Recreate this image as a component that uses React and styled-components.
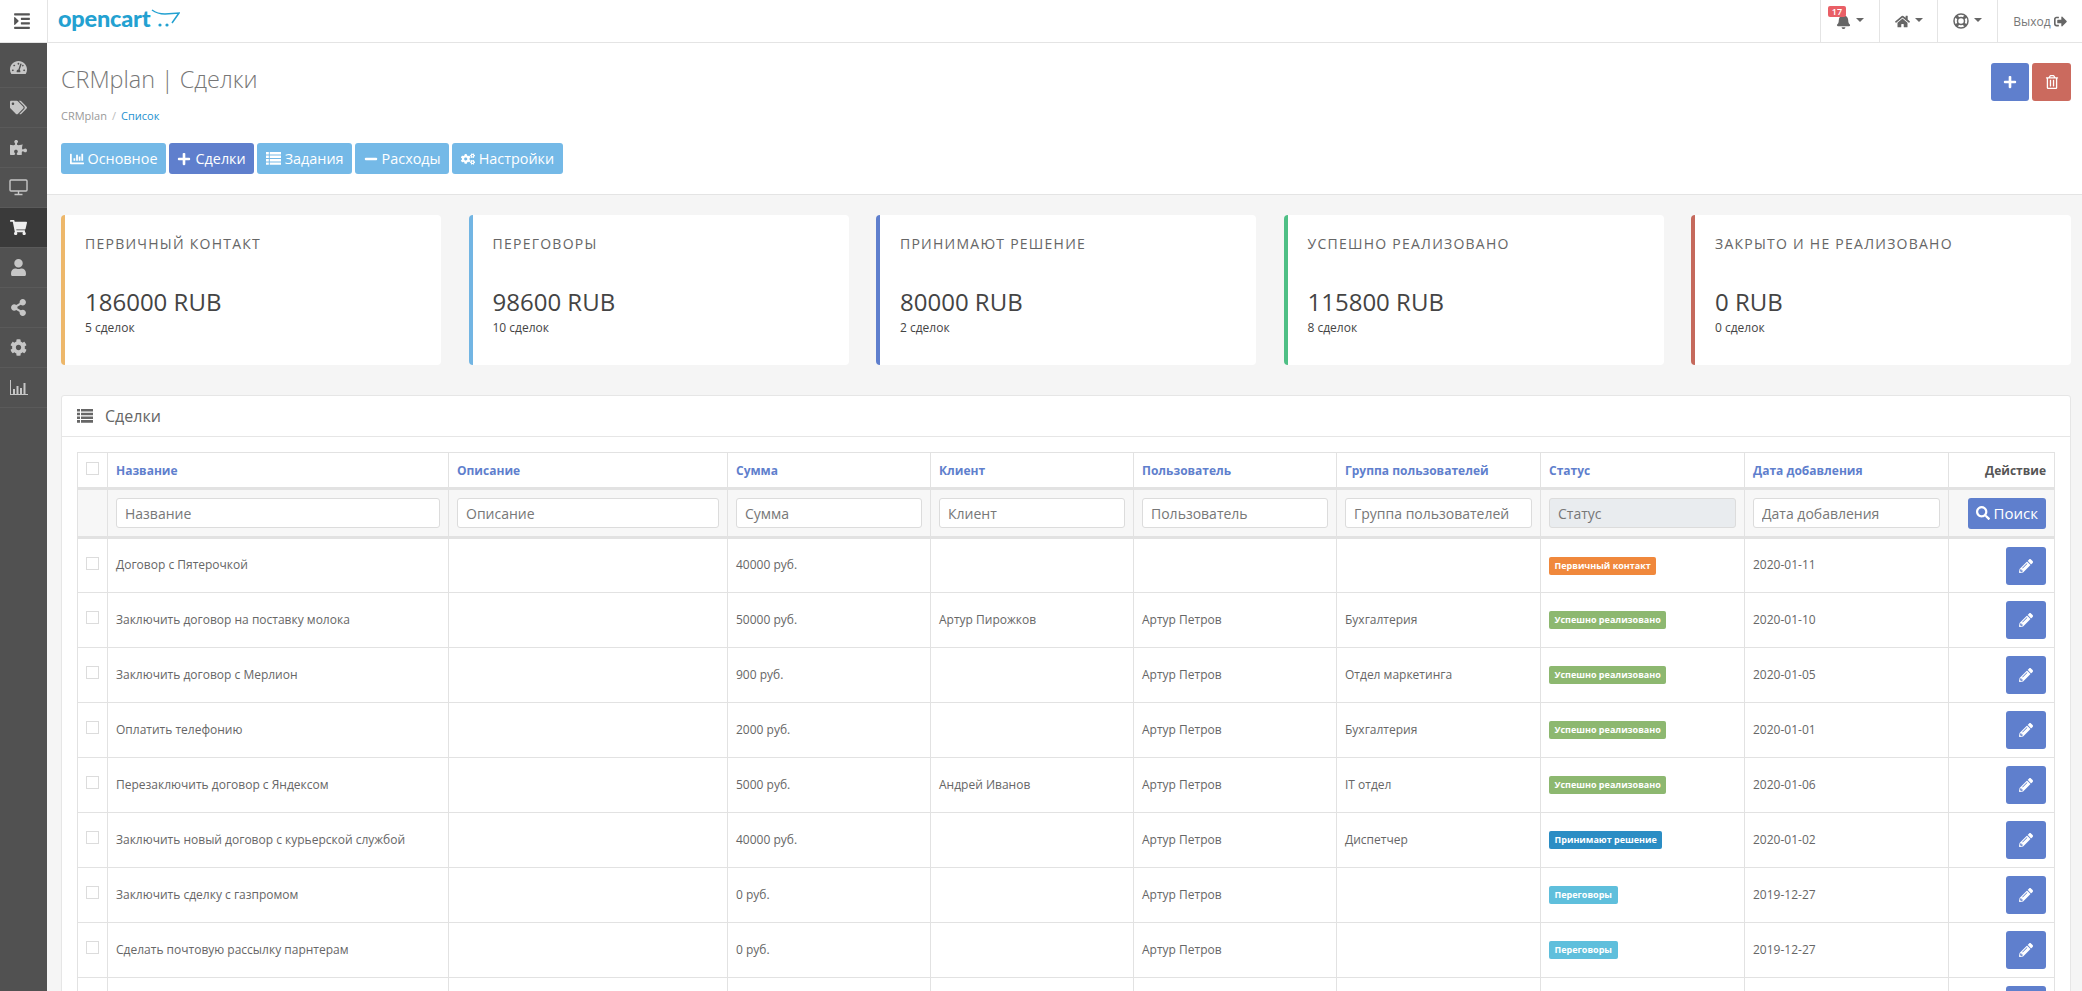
import styled, { createGlobalStyle } from 'styled-components'
import {
  FaBell, FaChartBar, FaCog, FaCogs, FaHome, FaIndent, FaMinus, FaPencilAlt, FaPlus,
  FaPuzzlePiece, FaRegTrashAlt, FaSearch, FaShareAlt, FaShoppingCart,
  FaSignOutAlt, FaTachometerAlt, FaTags, FaUser,
} from 'react-icons/fa'

const GlobalStyle = createGlobalStyle`
  html, body { margin: 0; padding: 0; height: 991px; overflow: hidden; }
  body {
    font-family: "Open Sans", "Liberation Sans", sans-serif;
    font-size: 13px;
    color: #666;
    background: #f5f5f5;
  }
  * { box-sizing: border-box; }
`

const Header = styled.header`
  display: flex;
  height: 43px;
  background: #fff;
  border-bottom: 1px solid #e4e4e4;
`

const MenuToggle = styled.div`
  width: 48px;
  display: flex;
  align-items: center;
  justify-content: center;
  padding-right: 3px;
  font-size: 18px;
  color: #555;
  border-right: 1px solid #e4e4e4;
`

const Logo = styled.div`
  display: flex;
  align-items: flex-start;
  margin-left: 10px;
  padding-top: 4px;
  font-family: "Lato", sans-serif;
  font-weight: 900;
  font-size: 23.5px;
  letter-spacing: -0.2px;
  color: #23a1d1;
`

const TopNav = styled.nav`
  display: flex;
  margin-left: auto;
`

const TopItem = styled.div`
  position: relative;
  display: flex;
  align-items: center;
  justify-content: center;
  gap: 3px;
  width: ${p => p.$w}px;
  font-size: 15px;
  color: #666;
  border-left: 1px solid #e4e4e4;
`

const Caret = styled.span`
  width: 0;
  height: 0;
  margin-left: 2px;
  margin-bottom: 2px;
  border-left: 4px solid transparent;
  border-right: 4px solid transparent;
  border-top: 4px solid #666;
`

const Badge = styled.span`
  position: absolute;
  left: 7px;
  top: 6px;
  width: 18px;
  height: 11px;
  border-radius: 2px;
  background: #e95f66;
  color: #fff;
  font-size: 9px;
  font-weight: 600;
  line-height: 11px;
  text-align: center;
`

const ExitText = styled.span`
  font-size: 12px;
  color: #777;
`

const Body = styled.div`
  display: flex;
`

const Sidebar = styled.aside`
  flex: 0 0 47px;
  height: 948px;
  padding-top: 5px;
  background: #515151;
`

const SideItem = styled.div`
  display: flex;
  align-items: center;
  justify-content: center;
  height: 40px;
  padding-right: 11px;
  font-size: 17px;
  color: ${p => (p.$active ? '#eee' : '#c6c6c6')};
  background: ${p => (p.$active ? '#3a3a3a' : 'transparent')};
  border-bottom: 1px solid #5a5a5a;
`

const Main = styled.main`
  flex: 1;
  min-width: 0;
`

const PageHeader = styled.div`
  display: flex;
  justify-content: space-between;
  height: 152px;
  padding: 20px 11px 0 14px;
  background: #fff;
  border-bottom: 1px solid #e4e4e4;
`

const Title = styled.h1`
  margin: 0;
  font-size: 23.4px;
  font-weight: 300;
  line-height: 32px;
  color: #777;
`

const Crumbs = styled.div`
  margin-top: 13px;
  font-size: 11px;
  line-height: 16px;
  color: #999;
  a { color: #1e91cf; text-decoration: none; }
  i { margin: 0 5px; font-style: normal; color: #bbb; }
`

const Tabs = styled.div`
  display: flex;
  gap: 3px;
  margin-top: 19px;
`

const Tab = styled.div`
  display: flex;
  align-items: center;
  gap: 4px;
  height: 31px;
  padding: 0 8.5px;
  border-radius: 3px;
  background: ${p => (p.$active ? '#5f7fcd' : '#74b9e7')};
  color: #fff;
  font-size: 14.4px;
  font-weight: 400;
  svg { font-size: 14px; }
`

const Actions = styled.div`
  display: flex;
  gap: 3px;
`

const SquareButton = styled.div`
  display: flex;
  align-items: center;
  justify-content: center;
  width: ${p => p.$w || 38}px;
  height: 38px;
  border-radius: 3px;
  background: ${p => p.$bg};
  color: #fff;
  font-size: 14px;
`

const Content = styled.div`
  padding: 20px 11px 0 14px;
`

const Cards = styled.div`
  display: grid;
  grid-template-columns: repeat(5, 1fr);
  gap: 27.5px;
`

const Card = styled.div`
  height: 150px;
  padding: 19px 20px 0 20px;
  background: #fff;
  border-left: 4px solid ${p => p.$color};
  border-radius: 4px;
`

const CardTitle = styled.div`
  font-size: 14px;
  line-height: 20px;
  font-weight: 500;
  letter-spacing: 1.25px;
  text-transform: uppercase;
  color: #666;
`

const CardValue = styled.div`
  margin-top: 31px;
  font-size: 24px;
  line-height: 34px;
  color: #444;
`

const CardSub = styled.div`
  margin-top: 1px;
  font-size: 12px;
  line-height: 16px;
  color: #444;
`

const Panel = styled.section`
  margin-top: 30px;
  height: 700px;
  background: #fff;
  border: 1px solid #e6e6e6;
  border-radius: 3px;
`

const PanelHead = styled.div`
  display: flex;
  align-items: center;
  gap: 12px;
  height: 41px;
  padding-left: 15px;
  border-bottom: 1px solid #e6e6e6;
  font-size: 16px;
  color: #666;
`

const PanelBody = styled.div`
  padding: 15px 15px 0 15px;
`

const Table = styled.table`
  width: 1977px;
  table-layout: fixed;
  border-collapse: collapse;
  font-size: 12px;
`

const HeadCell = styled.th`
  height: 36px;
  padding: 0 8px;
  text-align: ${p => (p.$right ? 'right' : 'left')};
  font-size: 12px;
  font-weight: 700;
  color: ${p => (p.$right ? '#555' : '#5f7fcd')};
  border: 1px solid #e2e2e2;
  border-bottom: 3px solid #e2e2e2;
`

const FilterCell = styled.td`
  height: 49px;
  padding: 0 8px;
  background: #f7f7f7;
  text-align: ${p => (p.$right ? 'right' : 'left')};
  border: 1px solid #e2e2e2;
  border-bottom: 3px solid #e2e2e2;
`

const FilterInput = styled.input`
  display: block;
  width: 100%;
  height: 30px;
  padding: 0 8px;
  font-family: inherit;
  font-size: 14px;
  color: #666;
  background: ${p => (p.disabled ? '#e9ecef' : '#fff')};
  border: 1px solid #dcdcdc;
  border-radius: 3px;
  &::placeholder { color: #777; opacity: 1; }
`

const SearchButton = styled.div`
  display: inline-flex;
  align-items: center;
  gap: 4px;
  height: 31px;
  padding: 0 8px;
  border-radius: 3px;
  background: #5f7fcd;
  color: #fff;
  font-size: 15px;
  svg { font-size: 14px; }
`

const Cell = styled.td`
  height: 55px;
  padding: 0 8px 2px;
  border: 1px solid #e2e2e2;
  color: #666;
  text-align: ${p => (p.$right ? 'right' : 'left')};
`

const Check = styled.span`
  display: block;
  width: 13px;
  height: 13px;
  margin: ${p => (p.$head ? '-4px' : '-3px')} 0 0 0;
  background: #fff;
  border: 1px solid #dcdcdc;
`

const Label = styled.span`
  display: inline-block;
  margin-top: 2px;
  padding: 0 5.5px;
  height: 18px;
  border-radius: 2px;
  background: ${p => p.$bg};
  color: #fff;
  font-size: 9px;
  font-weight: 700;
  line-height: 18px;
`

const EditButton = styled.div`
  display: inline-flex;
  align-items: center;
  justify-content: center;
  margin-top: 2px;
  vertical-align: middle;
  width: 40px;
  height: 38px;
  border-radius: 3px;
  background: #5f7fcd;
  color: #fff;
  font-size: 14px;
`

const DesktopIcon = () => (
  <svg width="19" height="17" viewBox="0 0 19 17" fill="none" stroke="currentColor">
    <rect x="1" y="1" width="17" height="11" rx="1" strokeWidth="1.4" />
    <path d="M9.5 12v3M5.5 15.5h8" strokeWidth="1.4" />
  </svg>
)

const BarsIcon = () => (
  <svg width="19" height="17" viewBox="0 0 19 17" fill="currentColor">
    <path d="M1 1h1v14h17v1H1z" />
    <path d="M4 10h2v5H4zM7.5 7h2v8h-2zM11 9h2v6h-2zM14.5 4h2v11h-2z" />
  </svg>
)

const ListIcon = ({ size = 16 }) => (
  <svg width={size} height={size * 0.875} viewBox="0 0 16 14" fill="currentColor">
    <path d="M0 0h3v2.600H0zM4 0h12v2.600H4zM0 3.700h3v2.600H0zM4 3.700h12v2.600H4zM0 7.400h3V10H0zM4 7.400h12V10H4zM0 11.100h3v2.600H0zM4 11.100h12v2.600H4z" />
  </svg>
)

const RingIcon = () => (
  <svg width="16" height="16" viewBox="0 0 16 16" fill="none" stroke="currentColor">
    <circle cx="8" cy="8" r="7" strokeWidth="1.500" />
    <circle cx="8" cy="8" r="3.500" strokeWidth="1.500" />
    <path d="M3 3l2.500 2.500M13 3l-2.500 2.500M3 13l2.500-2.500M13 13l-2.500-2.500" strokeWidth="3" />
  </svg>
)

const CartLogo = () => (
  <svg width="29" height="19" viewBox="0 0 29 19" style={{ marginLeft: 1, marginTop: 5 }}>
    <path d="M1 1c4 3 9 4 13 4l14-1-7 10" fill="none" stroke="#23a1d1" strokeWidth="1.500" />
    <circle cx="9" cy="16" r="1.600" fill="#23a1d1" />
    <circle cx="16" cy="16" r="1.600" fill="#23a1d1" />
  </svg>
)

const sideIcons = [
  <FaTachometerAlt />, <FaTags />, <FaPuzzlePiece />, <DesktopIcon />, <FaShoppingCart />,
  <FaUser />, <FaShareAlt />, <FaCog />, <BarsIcon />,
]

const tabs = [
  { icon: <FaChartBar />, text: 'Основное' },
  { icon: <FaPlus />, text: 'Сделки', active: true },
  { icon: <ListIcon size={15} />, text: 'Задания' },
  { icon: <FaMinus />, text: 'Расходы' },
  { icon: <FaCogs />, text: 'Настройки' },
]

const cards = [
  { title: 'Первичный контакт', value: '186000 RUB', sub: '5 сделок', color: '#edb76a' },
  { title: 'Переговоры', value: '98600 RUB', sub: '10 сделок', color: '#72b5e3' },
  { title: 'Принимают решение', value: '80000 RUB', sub: '2 сделок', color: '#5f7fcd' },
  { title: 'Успешно реализовано', value: '115800 RUB', sub: '8 сделок', color: '#4fbf85' },
  { title: 'Закрыто и не реализовано', value: '0 RUB', sub: '0 сделок', color: '#c5695c' },
]

const columns = [
  { name: 'Название', w: 341 },
  { name: 'Описание', w: 279 },
  { name: 'Сумма', w: 203 },
  { name: 'Клиент', w: 203 },
  { name: 'Пользователь', w: 203 },
  { name: 'Группа пользователей', w: 204 },
  { name: 'Статус', w: 204, disabled: true },
  { name: 'Дата добавления', w: 204 },
]

const statusColors = {
  'Первичный контакт': '#f0883c',
  'Успешно реализовано': '#8db870',
  'Принимают решение': '#2b8dc4',
  'Переговоры': '#5fbfdc',
}

const rows = [
  ['Договор с Пятерочкой', '40000 руб.', '', '', '', 'Первичный контакт', '2020-01-11'],
  ['Заключить договор на поставку молока', '50000 руб.', 'Артур Пирожков', 'Артур Петров', 'Бухгалтерия', 'Успешно реализовано', '2020-01-10'],
  ['Заключить договор с Мерлион', '900 руб.', '', 'Артур Петров', 'Отдел маркетинга', 'Успешно реализовано', '2020-01-05'],
  ['Оплатить телефонию', '2000 руб.', '', 'Артур Петров', 'Бухгалтерия', 'Успешно реализовано', '2020-01-01'],
  ['Перезаключить договор с Яндексом', '5000 руб.', 'Андрей Иванов', 'Артур Петров', 'IT отдел', 'Успешно реализовано', '2020-01-06'],
  ['Заключить новый договор с курьерской службой', '40000 руб.', '', 'Артур Петров', 'Диспетчер', 'Принимают решение', '2020-01-02'],
  ['Заключить сделку с газпромом', '0 руб.', '', 'Артур Петров', '', 'Переговоры', '2019-12-27'],
  ['Сделать почтовую рассылку парнтерам', '0 руб.', '', 'Артур Петров', '', 'Переговоры', '2019-12-27'],
]

const App = () => (
  <>
    <GlobalStyle />
    <Header>
      <MenuToggle><FaIndent /></MenuToggle>
      <Logo>opencart<CartLogo /></Logo>
      <TopNav>
        <TopItem $w={59}>
          <Badge>17</Badge>
          <FaBell /><Caret />
        </TopItem>
        <TopItem $w={58}><FaHome /><Caret /></TopItem>
        <TopItem $w={60}><RingIcon /><Caret /></TopItem>
        <TopItem $w={85}><ExitText>Выход</ExitText><FaSignOutAlt size={13} /></TopItem>
      </TopNav>
    </Header>
    <Body>
      <Sidebar>
        {sideIcons.map((icon, i) => (
          <SideItem key={i} $active={i === 4}>{icon}</SideItem>
        ))}
      </Sidebar>
      <Main>
        <PageHeader>
          <div>
            <Title>CRMplan | Сделки</Title>
            <Crumbs>CRMplan<i>/</i><a href="#">Список</a></Crumbs>
            <Tabs>
              {tabs.map(t => (
                <Tab key={t.text} $active={t.active}>{t.icon}{t.text}</Tab>
              ))}
            </Tabs>
          </div>
          <Actions>
            <SquareButton $bg="#5f7fcd"><FaPlus /></SquareButton>
            <SquareButton $bg="#cb6a5e" $w={39}><FaRegTrashAlt /></SquareButton>
          </Actions>
        </PageHeader>
        <Content>
          <Cards>
            {cards.map(c => (
              <Card key={c.title} $color={c.color}>
                <CardTitle>{c.title}</CardTitle>
                <CardValue>{c.value}</CardValue>
                <CardSub>{c.sub}</CardSub>
              </Card>
            ))}
          </Cards>
          <Panel>
            <PanelHead><ListIcon />Сделки</PanelHead>
            <PanelBody>
              <Table>
                <colgroup>
                  <col style={{ width: 30 }} />
                  {columns.map(c => <col key={c.name} style={{ width: c.w }} />)}
                  <col style={{ width: 106 }} />
                </colgroup>
                <thead>
                  <tr>
                    <HeadCell><Check $head /></HeadCell>
                    {columns.map(c => <HeadCell key={c.name}>{c.name}</HeadCell>)}
                    <HeadCell $right>Действие</HeadCell>
                  </tr>
                </thead>
                <tbody>
                  <tr>
                    <FilterCell />
                    {columns.map(c => (
                      <FilterCell key={c.name}>
                        <FilterInput placeholder={c.name} disabled={c.disabled} />
                      </FilterCell>
                    ))}
                    <FilterCell $right><SearchButton><FaSearch />Поиск</SearchButton></FilterCell>
                  </tr>
                  {rows.map(r => (
                    <tr key={r[0]}>
                      <Cell><Check /></Cell>
                      <Cell>{r[0]}</Cell>
                      <Cell />
                      <Cell>{r[1]}</Cell>
                      <Cell>{r[2]}</Cell>
                      <Cell>{r[3]}</Cell>
                      <Cell>{r[4]}</Cell>
                      <Cell><Label $bg={statusColors[r[5]]}>{r[5]}</Label></Cell>
                      <Cell>{r[6]}</Cell>
                      <Cell $right><EditButton><FaPencilAlt /></EditButton></Cell>
                    </tr>
                  ))}
                  <tr>
                    <Cell /><Cell /><Cell /><Cell /><Cell /><Cell /><Cell /><Cell /><Cell />
                    <Cell $right><EditButton><FaPencilAlt /></EditButton></Cell>
                  </tr>
                </tbody>
              </Table>
            </PanelBody>
          </Panel>
        </Content>
      </Main>
    </Body>
  </>
)

export default App
